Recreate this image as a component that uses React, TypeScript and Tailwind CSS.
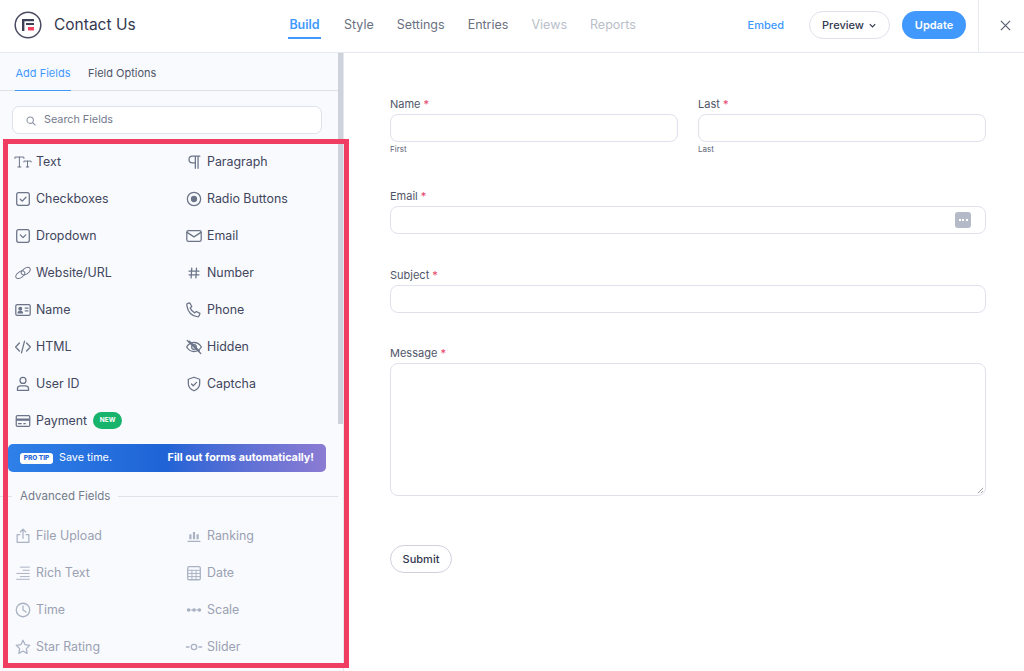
import { ReactNode } from "react";

const Svg = ({ children, dim }: { children: ReactNode; dim?: boolean }) => (
  <svg
    viewBox="0 0 20 20"
    fill="none"
    stroke="currentColor"
    strokeWidth="1.4"
    strokeLinecap="round"
    strokeLinejoin="round"
    className={dim ? "w-[18px] h-[18px] shrink-0 text-[#a9b2c3]" : "w-[18px] h-[18px] shrink-0 text-[#6b7488]"}
  >
    {children}
  </svg>
);

const icons: Record<string, ReactNode> = {
  text: (
    <>
      <path d="M1 6V4.500h10V6M6 4.500V15.500M4.300 15.500h3.400" strokeWidth="1.100" />
      <path d="M11 10V9h8v1M15 9v6.500M13.600 15.500h2.800" strokeWidth="1.100" />
    </>
  ),
  paragraph: <path d="M14.500 3.500V17M11.500 3.500V17M16.500 3.500H8.200a3.600 3.600 0 0 0 0 7.500h3.300" />,
  check: (
    <>
      <rect x="3" y="3" width="14" height="14" rx="2.200" />
      <path d="M7 10.200l2.200 2.200L13.300 8" />
    </>
  ),
  radio: (
    <>
      <circle cx="10" cy="10" r="7.400" />
      <circle cx="10" cy="10" r="2.800" fill="currentColor" />
    </>
  ),
  dropdown: (
    <>
      <rect x="3" y="3" width="14" height="14" rx="2.200" />
      <path d="M7 8.800l3 3 3-3" />
    </>
  ),
  email: (
    <>
      <rect x="2" y="4" width="16" height="12" rx="1.800" />
      <path d="M2.300 6l7.700 5 7.700-5" />
    </>
  ),
  link: (
    <g strokeWidth="1.100">
      <ellipse cx="7" cy="12" rx="5.600" ry="3.200" transform="rotate(-35 7 12)" />
      <ellipse cx="13" cy="8" rx="5.600" ry="3.200" transform="rotate(-35 13 8)" />
    </g>
  ),
  hash: <path d="M7.500 4.500L6.800 15.500M12.800 4.500L12.100 15.500M4.500 8h11M4.500 12h11" />,
  name: (
    <>
      <rect x="2" y="4" width="16" height="12" rx="1.600" />
      <circle cx="7" cy="8.500" r="1.500" fill="currentColor" />
      <path d="M4.500 13.200c.3-2.400 4.700-2.400 5 0z" fill="currentColor" />
      <path d="M12.500 8h3M12.500 11h3" />
    </>
  ),
  phone: (
    <path d="M2.500 2.800l2.800-.8 2.200 4.200-1.700 1.600c.9 2.400 2.600 4.300 5 5.400l1.800-1.600 4 2.200-.9 2.700c-.3.700-1 1.100-1.800 1C7.500 16.500 3 11.500 2 4.800c-.1-.9 0-1.700.5-2z" />
  ),
  html: <path d="M6 5.500L1.800 10 6 14.500M14 5.500l4.200 4.500-4.200 4.500M11.700 3.500L8.300 16.500" />,
  hidden: (
    <>
      <path d="M1.800 10s3-5 8.200-5 8.200 5 8.200 5-3 5-8.200 5-8.200-5-8.200-5z" />
      <circle cx="10" cy="10" r="2.600" />
      <path d="M2.500 2.800l15 14.400M5 3.500l11 11" />
    </>
  ),
  user: (
    <>
      <circle cx="10" cy="6" r="3.300" />
      <path d="M3.800 17v-1.500c0-2 1.500-3.300 3.500-3.300h5.400c2 0 3.500 1.300 3.500 3.300V17z" />
    </>
  ),
  captcha: (
    <>
      <path d="M10 2.500l6.300 2.200v5c0 3.600-2.600 6.200-6.300 7.800-3.700-1.600-6.300-4.200-6.300-7.800v-5z" />
      <path d="M7.200 10l2 2 3.600-3.800" />
    </>
  ),
  payment: (
    <>
      <rect x="2.500" y="4" width="15" height="12" rx="1.300" />
      <path d="M2.500 8.500h15" strokeWidth="2.600" strokeLinecap="butt" />
      <path d="M5 13h3M11 13h1.500" />
    </>
  ),
  upload: <path d="M6.500 8.500H3.500V17h13V8.500h-3M10 12.500V2.800M7 5.500l3-3 3 3" />,
  ranking: (
    <>
      <path d="M6 8v5.500M10 5.500v8M14 8v5.500" strokeWidth="2.400" strokeLinecap="butt" />
      <path d="M3.500 16h13" />
    </>
  ),
  rich: <path d="M7 3.500h10M10 7h7M3 10.500h14M7 14h10M3 17h14" strokeWidth="1.100" />,
  date: (
    <>
      <rect x="3" y="3" width="14" height="14.500" rx="1.500" />
      <path d="M3 7h14M3 10.500h14M3 14h14M7.700 7v10.500M12.300 7v10.500" strokeWidth="1.100" />
    </>
  ),
  time: (
    <>
      <circle cx="10" cy="10" r="7.500" />
      <path d="M10 5.500V10l3.500 2.200" />
    </>
  ),
  scale: (
    <g fill="currentColor">
      <circle cx="4" cy="10" r="1.300" />
      <circle cx="10" cy="10" r="1.300" />
      <circle cx="16" cy="10" r="1.300" />
      <path d="M4 10h12" strokeWidth="1" />
    </g>
  ),
  star: <path d="M10 2.500l2.300 4.900 5.200.7-3.800 3.700.9 5.300-4.600-2.600-4.600 2.600.9-5.300-3.800-3.700 5.200-.7z" />,
  slider: (
    <>
      <circle cx="10" cy="10" r="3" />
      <path d="M1.500 10h3M15.500 10h3" />
    </>
  ),
};

const Field = ({ icon, label, dim }: { icon: string; label: string; dim?: boolean }) => (
  <div className={dim ? "h-[37px] flex items-center gap-[4px] text-[#99a1b3]" : "h-[37px] flex items-center gap-[4px] text-[#41465e]"}>
    <span className="w-[18px] flex justify-center">
      <Svg dim={dim}>{icons[icon]}</Svg>
    </span>
    <span className={dim ? "text-[12.400px] leading-none" : "text-[12.400px] leading-none pt-[1px]"}>{label}</span>
  </div>
);

const Label = ({ text }: { text: string }) => (
  <div className="text-[11px] leading-[14px] text-[#4f5568]">
    {text} <span className="text-[#e5426a]">*</span>
  </div>
);

const Input = ({ children }: { children?: ReactNode }) => (
  <div className="mt-[3px] h-[28px] bg-white border border-[#dfe1ec] rounded-[8px] flex items-center justify-end pr-[14px]">
    {children}
  </div>
);

const tabs = [
  { t: "Style", c: "text-[#6a7080]" },
  { t: "Settings", c: "text-[#6a7080]" },
  { t: "Entries", c: "text-[#6a7080]" },
  { t: "Views", c: "text-[#b9bec9]" },
  { t: "Reports", c: "text-[#b9bec9]" },
];

export default function App() {
  return (
    <div className="relative w-[1024px] h-[671px] overflow-hidden bg-white font-['Inter',sans-serif] flex flex-col">
      {/* top bar */}
      <header className="h-[53px] shrink-0 border-b border-[#e6e8ef] flex items-center pb-[2px] pr-[13px]">
        <svg viewBox="0 0 28 28" className="w-[28px] h-[28px] ml-[14px]">
          <circle cx="14" cy="14" r="12.800" fill="white" stroke="#4a4b60" strokeWidth="1.500" />
          <path d="M8 8h12v2.200H8zM8 8h2.400v12H8zM12 12h8v2h-8z" fill="#3e4058" />
          <rect x="14" y="16" width="6" height="3.500" fill="#ee4263" />
        </svg>
        <div className="ml-[12px] w-[234px] text-[15.500px] text-[#33384f]">Contact Us</div>
        <nav className="flex items-center text-[12.500px] gap-[23px] pt-[1px]">
          <div className="h-[26px] mt-[1px] border-b-2 border-[#4199fd] text-[#4199fd] font-semibold leading-[24px] w-[33px] flex justify-center">
            Build
          </div>
          {tabs.map((x) => (
            <span key={x.t} className={x.c}>
              {x.t}
            </span>
          ))}
        </nav>
        <span className="ml-auto text-[11px] font-medium text-[#4199fd]">Embed</span>
        <div className="ml-[25px] w-[81px] h-[28px] rounded-full border border-[#dfe1ec] flex items-center justify-center gap-[4px] text-[11px] font-medium text-[#33384f]">
          Preview
          <svg viewBox="0 0 10 10" className="w-[9px] h-[9px]" fill="none" stroke="#33384f" strokeWidth="1.300">
            <path d="M2 3.500l3 3 3-3" />
          </svg>
        </div>
        <div className="ml-[12px] w-[64px] h-[28px] rounded-full bg-[#4199fd] flex items-center justify-center text-[11px] font-semibold text-white">
          Update
        </div>
        <div className="ml-[12px] self-stretch -mb-[2px] w-px bg-[#e6e8ef]" />
        <svg viewBox="0 0 12 12" className="ml-[21px] w-[11px] h-[11px]" fill="none" stroke="#5d6376" strokeWidth="1.400">
          <path d="M1 1l10 10M11 1L1 11" />
        </svg>
      </header>

      <div className="flex flex-1 min-h-0">
        {/* left panel */}
        <aside className="w-[344px] shrink-0 bg-[#f9fafd] border-r border-[#e6e8ef] flex">
          <div className="w-[338px] shrink-0 flex flex-col">
            <div className="h-[38px] border-b border-[#dfe2ea] flex items-stretch pl-[15px] gap-[17px] text-[11px]">
              <div className="border-b border-[#4199fd] text-[#4199fd] h-[38px] w-[56px] pt-[3px] flex items-center justify-center">
                Add Fields
              </div>
              <div className="text-[#4f5568] pt-[3px] flex items-center">Field Options</div>
            </div>
            <div className="mt-[15px] ml-[12px] w-[310px] h-[28px] bg-white border border-[#dfe1ec] rounded-[7px] flex items-center pl-[13px] pt-[1px] gap-[8px] text-[10.800px] text-[#737a8c]">
              <svg viewBox="0 0 12 12" className="w-[10px] h-[10px]" fill="none" stroke="#8d94a5" strokeWidth="1.300">
                <circle cx="5" cy="5" r="3.800" />
                <path d="M8 8l3.300 3.300" />
              </svg>
              Search Fields
            </div>

            <div className="mt-[9px] pl-[14px] grid grid-cols-[171px_1fr]">
              <Field icon="text" label="Text" />
              <Field icon="paragraph" label="Paragraph" />
              <Field icon="check" label="Checkboxes" />
              <Field icon="radio" label="Radio Buttons" />
              <Field icon="dropdown" label="Dropdown" />
              <Field icon="email" label="Email" />
              <Field icon="link" label="Website/URL" />
              <Field icon="hash" label="Number" />
              <Field icon="name" label="Name" />
              <Field icon="phone" label="Phone" />
              <Field icon="html" label="HTML" />
              <Field icon="hidden" label="Hidden" />
              <Field icon="user" label="User ID" />
              <Field icon="captcha" label="Captcha" />
              <div className="h-[37px] flex items-center gap-[4px] text-[#41465e]">
                <span className="w-[18px] flex justify-center">
                  <Svg>{icons.payment}</Svg>
                </span>
                <span className="text-[12.400px] leading-none pt-[1px]">Payment</span>
                <span className="ml-[2px] w-[29px] h-[17px] rounded-full bg-[#19b46c] text-white text-[6.500px] font-bold flex items-center justify-center">
                  NEW
                </span>
              </div>
            </div>

            <div className="mt-[5px] ml-[8px] w-[318px] h-[28px] shrink-0 rounded-[5px] bg-gradient-to-r from-[#2f80e8] via-[#1f63d6] to-[#8b7bd3] flex items-center pl-[12px] pr-[12px] pt-[1px] text-white">
              <span className="w-[33px] h-[11px] bg-white rounded-[3px] text-[#2468d8] text-[6.500px] font-extrabold flex items-center justify-center">
                PRO TIP
              </span>
              <span className="ml-[6px] text-[10.800px]">Save time.</span>
              <span className="ml-auto text-[10.800px] font-bold">Fill out forms automatically!</span>
            </div>

            <div className="mt-[16px] flex items-center text-[11.500px] text-[#737a8c] shrink-0">
              <span className="w-[12px] h-px bg-[#dfe2ea]" />
              <span className="px-[8px]">Advanced Fields</span>
              <span className="flex-1 h-px bg-[#dfe2ea]" />
            </div>

            <div className="mt-[12px] pl-[14px] grid grid-cols-[171px_1fr]">
              <Field dim icon="upload" label="File Upload" />
              <Field dim icon="ranking" label="Ranking" />
              <Field dim icon="rich" label="Rich Text" />
              <Field dim icon="date" label="Date" />
              <Field dim icon="time" label="Time" />
              <Field dim icon="scale" label="Scale" />
              <Field dim icon="star" label="Star Rating" />
              <Field dim icon="slider" label="Slider" />
            </div>
          </div>
          <div className="w-[6px] h-[371px] bg-[#cdd2db]" />
        </aside>

        {/* form preview */}
        <main className="flex-1 pl-[46px] pr-[38px] pt-[44px]">
          <div className="grid grid-cols-[288px_288px] gap-x-[20px]">
            <div>
              <Label text="Name" />
              <Input />
              <div className="mt-[2px] text-[8px] leading-[10px] text-[#5d6376]">First</div>
            </div>
            <div>
              <Label text="Last" />
              <Input />
              <div className="mt-[2px] text-[8px] leading-[10px] text-[#5d6376]">Last</div>
            </div>
          </div>
          <div className="mt-[35px]">
            <Label text="Email" />
            <Input>
              <span className="w-[16px] h-[16px] rounded-[3px] bg-[#b4bac7] flex items-center justify-center gap-[1.500px]">
                <span className="w-[2px] h-[2px] bg-white" />
                <span className="w-[2px] h-[2px] bg-white" />
                <span className="w-[2px] h-[2px] bg-white" />
              </span>
            </Input>
          </div>
          <div className="mt-[34px]">
            <Label text="Subject" />
            <Input />
          </div>
          <div className="mt-[33px]">
            <Label text="Message" />
            <div className="relative mt-[3px] h-[133px] bg-white border border-[#dfe1ec] rounded-[8px]">
              <svg viewBox="0 0 8 8" className="absolute right-[1px] bottom-[1px] w-[7px] h-[7px]" fill="none" stroke="#777" strokeWidth="0.800">
                <path d="M1 7l6-6M4.500 7L7 4.500" />
              </svg>
            </div>
          </div>
          <div className="mt-[49px] w-[62px] h-[28px] rounded-full border border-[#cfd2de] flex items-center justify-center text-[11px] font-medium text-[#33384f]">
            Submit
          </div>
        </main>
      </div>

      {/* highlight drawn over the field list */}
      <div className="absolute left-[3px] top-[139px] w-[346px] h-[529px] border-[5px] border-[#f03e62] pointer-events-none" />
    </div>
  );
}
